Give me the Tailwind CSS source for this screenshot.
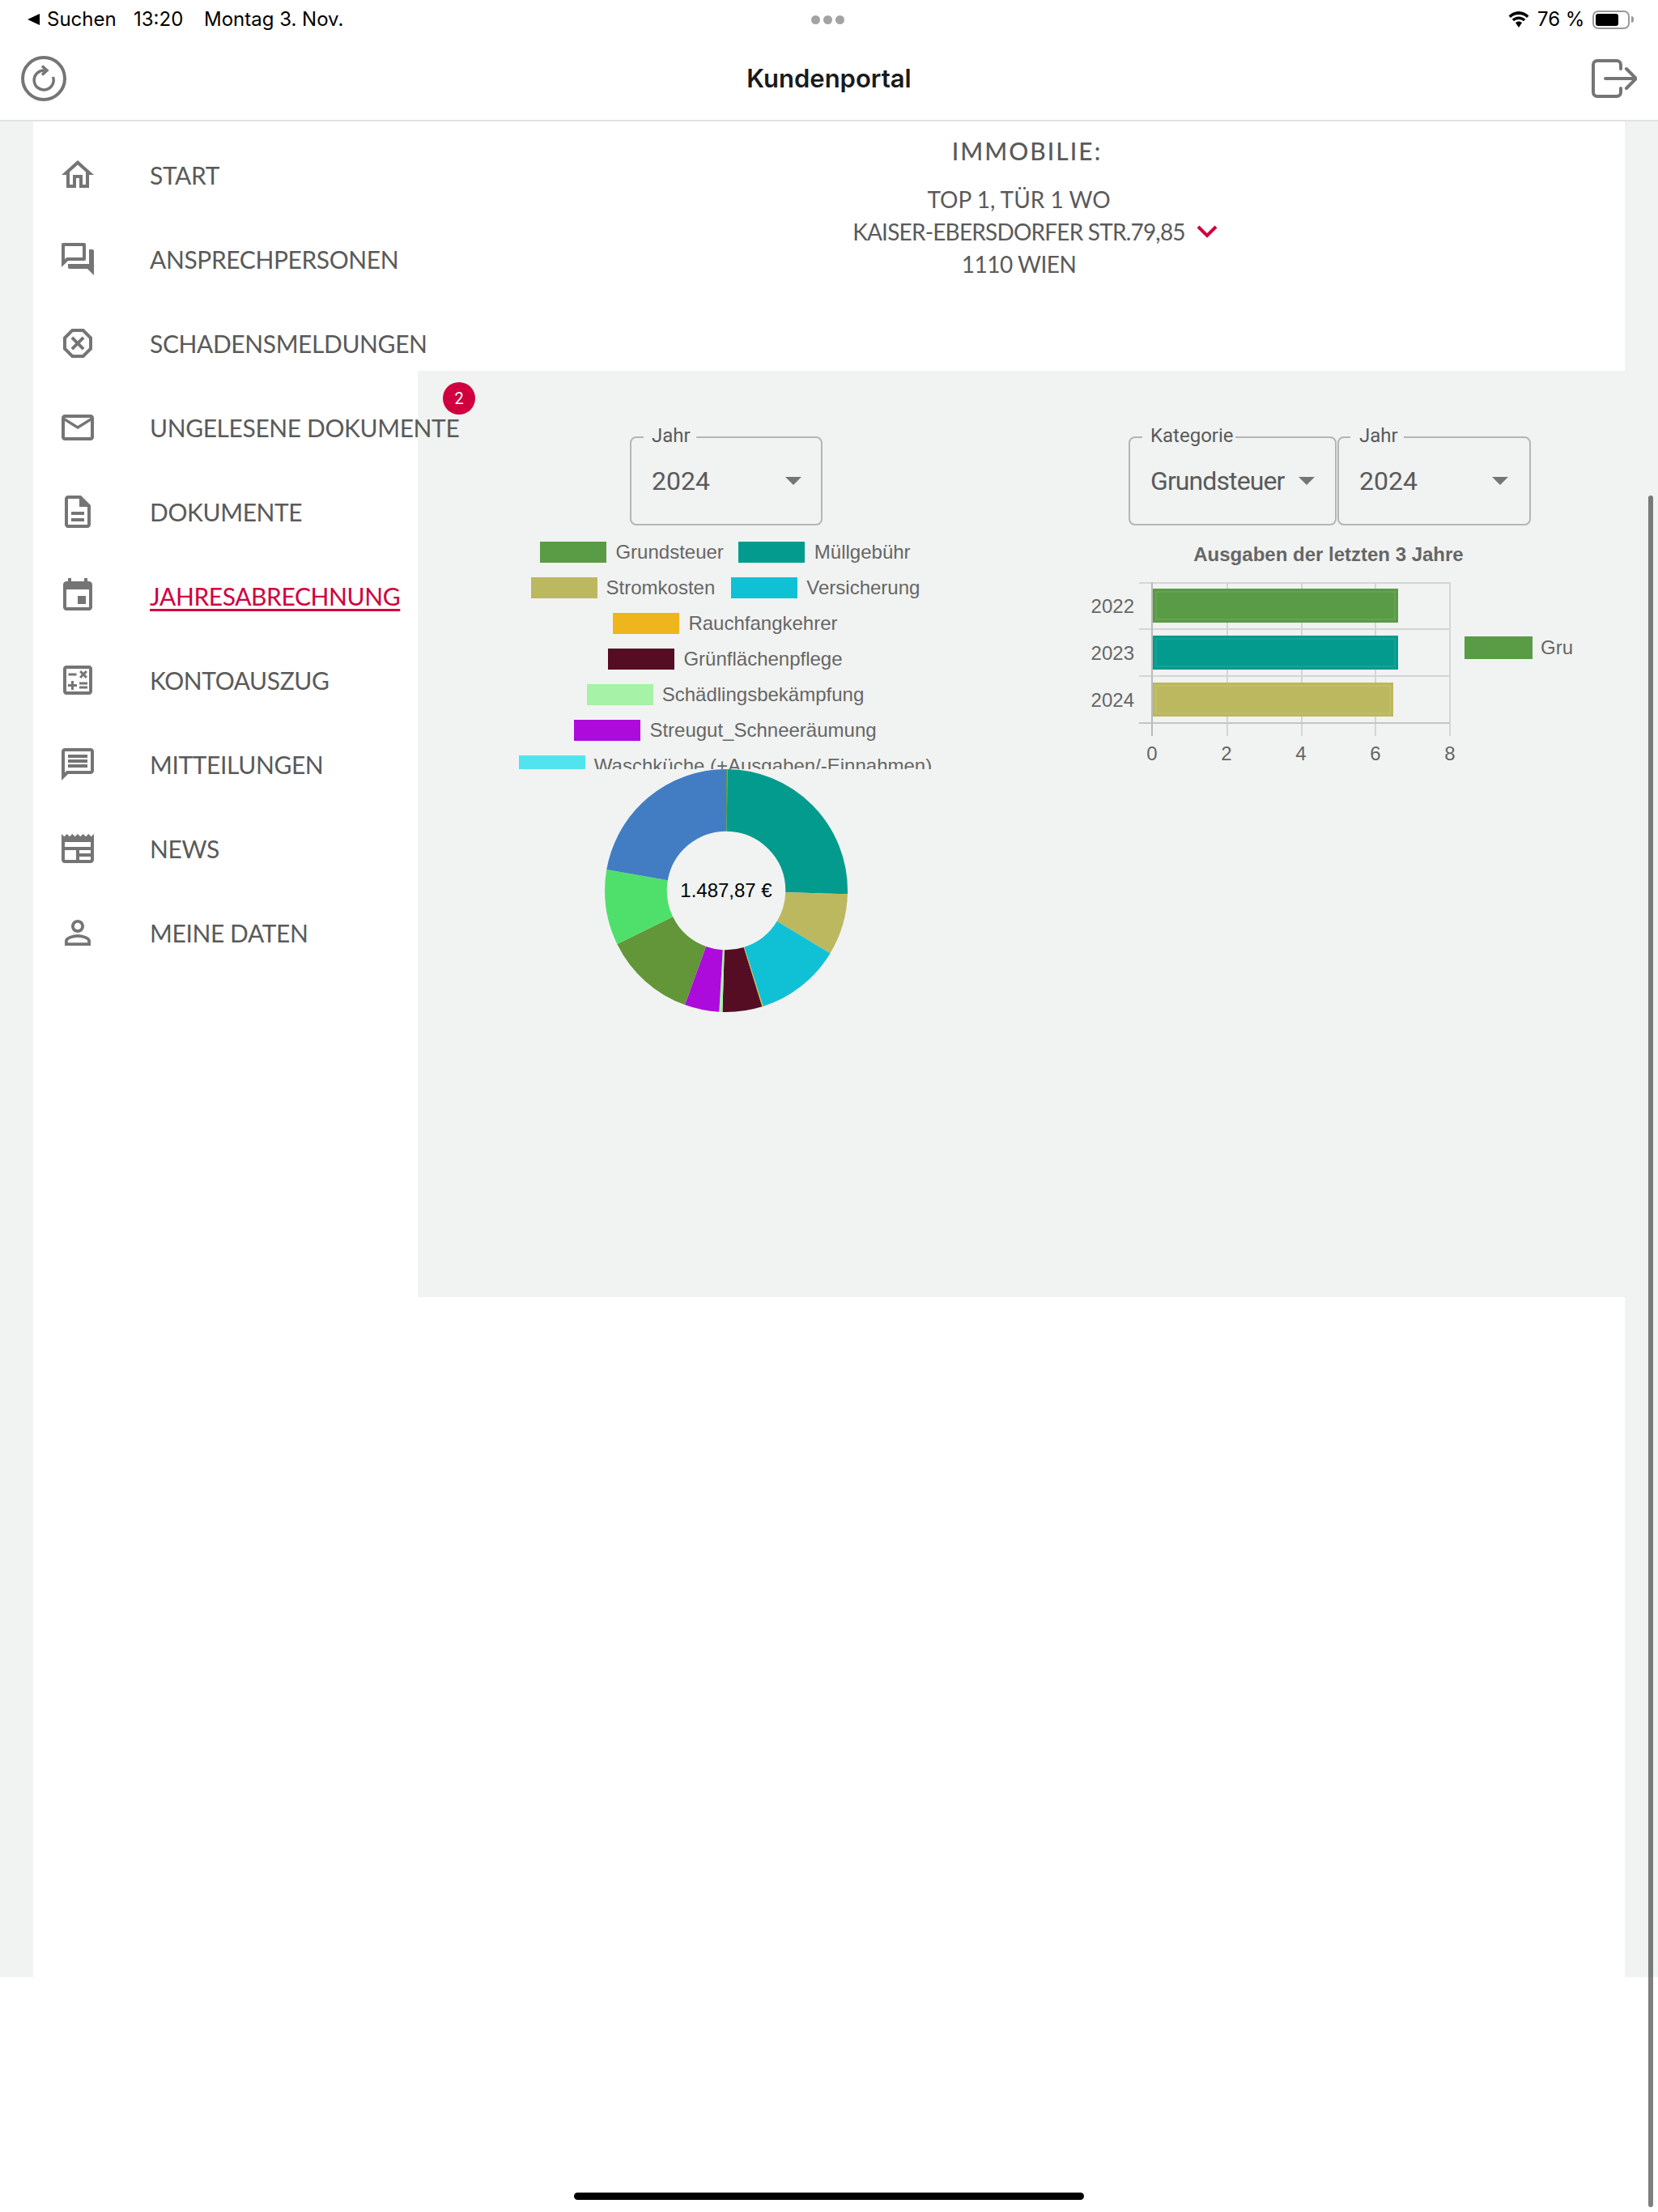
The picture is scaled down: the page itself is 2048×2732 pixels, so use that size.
<!DOCTYPE html>
<html lang="de"><head><meta charset="utf-8"><title>Kundenportal</title>
<script src="https://cdn.jsdelivr.net/npm/@tailwindcss/browser@4"></script></head>
<body class="relative w-[2048px] h-[2732px] bg-white overflow-hidden font-['Lato',sans-serif]">
<div class="h-[48px] flex items-center justify-between pl-[34px] pr-[30px] relative text-black font-['Inter',sans-serif] text-[24px]">
  <div class="flex items-center">
    <svg class="w-[15px] h-[14px] mr-[9px]" viewBox="0 0 15 14"><path d="M15 0v14L0 7z" fill="#000"/></svg>
    <span class="w-[107px]">Suchen</span><span class="w-[87px]">13:20</span><span>Montag 3. Nov.</span>
  </div>
  <div class="absolute left-[1002px] top-[19px] flex gap-[4px]"><i class="w-[11px] h-[11px] rounded-full bg-[#a3a3a3]"></i><i class="w-[11px] h-[11px] rounded-full bg-[#a3a3a3]"></i><i class="w-[11px] h-[11px] rounded-full bg-[#a3a3a3]"></i></div>
  <div class="flex items-center">
    <svg class="w-[26px] h-[20px] mr-[10px]" viewBox="0 0 26 20"><path d="M13 4c4 0 7.400 1.500 10 4l2.500-2.500C22.200 2.300 17.800 0 13 0S3.800 2.300.5 5.500L3 8c2.600-2.500 6-4 10-4zM13 10c2.300 0 4.300.9 5.800 2.300l2.500-2.500C19.100 7.700 16.200 6.400 13 6.400S6.900 7.700 4.700 9.800l2.500 2.500C8.700 10.900 10.700 10 13 10zM13 12.500c-1.600 0-3 .6-4 1.600l4 5.900 4-5.900c-1-1-2.400-1.600-4-1.600z" fill="#000"/></svg>
    <span class="w-[68px]">76 %</span>
    <div class="w-[46px] h-[23px] border-2 border-[#9a9a9a] rounded-[7px] p-[2px] pr-[12px]"><div class="w-full h-full bg-black rounded-[3px]"></div></div>
    <div class="w-[3px] h-[8px] bg-[#9a9a9a] rounded-r-full ml-[2px]"></div>
  </div>
</div>
<header class="h-[102px] border-b-2 border-[#e2e2e2] flex items-center justify-between pl-[26px] pr-[26px] pb-[2px]">
  <svg class="w-[56px] h-[56px]" viewBox="0 0 56 56" fill="none" stroke="#757575" stroke-width="4"><circle cx="28" cy="28" r="26"/><path d="M39.500 26A12 12 0 1 1 29 18" stroke-width="3.500"/><path d="M26 12.500l6 5.500-6 5.500" stroke-width="3.500"/></svg>
  <h1 class="text-[31px] font-semibold text-[#1a1a1a] font-['Inter',sans-serif]">Kundenportal</h1>
  <svg class="w-[56px] h-[48px]" viewBox="0 0 56 48" fill="none" stroke="#757575" stroke-width="4" stroke-linecap="round" stroke-linejoin="round"><path d="M36 12V7a5 5 0 0 0-5-5H7a5 5 0 0 0-5 5v34a5 5 0 0 0 5 5h24a5 5 0 0 0 5-5v-5"/><path d="M17 24h37M43 12l12 12-12 12"/></svg>
</header>
<main class="h-[2292px] bg-[#f1f3f2] pl-[41px] pr-[41px] flex">
  <div class="flex-1 bg-white flex min-w-0">
    <nav class="w-[475px] shrink-0 pt-[14px] relative z-10 text-[#5a5a5a] text-[30px] tracking-[-0.4px]">
      <a class="h-[104px] flex items-center pl-[31px] whitespace-nowrap"><svg class="w-[48px] h-[48px] shrink-0 mr-[65px] fill-[#757575]" viewBox="0 0 24 24"><path d="M12 5.690l5 4.500V18h-2v-6H9v6H7v-7.810l5-4.500M12 3L2 12h3v8h6v-6h2v6h6v-8h3L12 3z"/></svg>START</a>
      <a class="h-[104px] flex items-center pl-[31px] whitespace-nowrap"><svg class="w-[48px] h-[48px] shrink-0 mr-[65px] fill-[#757575]" viewBox="0 0 24 24"><path d="M15 4v7H5.170L4 12.170V4h11m1-2H3c-.55 0-1 .45-1 1v14l4-4h10c.55 0 1-.45 1-1V3c0-.55-.45-1-1-1zm5 4h-2v9H6v2c0 .55.45 1 1 1h11l4 4V7c0-.55-.45-1-1-1z"/></svg>ANSPRECHPERSONEN</a>
      <a class="h-[104px] flex items-center pl-[31px] whitespace-nowrap"><svg class="w-[48px] h-[48px] shrink-0 mr-[65px] fill-[#757575]" viewBox="0 0 24 24"><path d="M15.730 3H8.270L3 8.270v7.460L8.270 21h7.460L21 15.730V8.270L15.730 3zM19 14.900L14.900 19H9.100L5 14.900V9.100L9.100 5h5.800L19 9.100v5.800z"/><path d="M14.830 7.760L12 10.590 9.170 7.760 7.760 9.170 10.590 12l-2.830 2.830 1.410 1.410L12 13.410l2.830 2.830 1.410-1.410L13.410 12l2.830-2.830z"/></svg>SCHADENSMELDUNGEN</a>
      <a class="h-[104px] flex items-center pl-[31px] whitespace-nowrap relative"><svg class="w-[48px] h-[48px] shrink-0 mr-[65px] fill-[#757575]" viewBox="0 0 24 24"><path d="M20 4H4c-1.100 0-1.990.9-1.990 2L2 18c0 1.100.9 2 2 2h16c1.100 0 2-.9 2-2V6c0-1.100-.9-2-2-2zm0 14H4V8l8 5 8-5v10zm-8-7L4 6h16l-8 5z"/></svg>UNGELESENE DOKUMENTE<span class="absolute left-[506px] top-[-4px] w-[40px] h-[40px] rounded-full bg-[#d0003f] text-white text-[20px] flex items-center justify-center font-['Roboto',sans-serif]">2</span></a>
      <a class="h-[104px] flex items-center pl-[31px] whitespace-nowrap"><svg class="w-[48px] h-[48px] shrink-0 mr-[65px] fill-[#757575]" viewBox="0 0 24 24"><path d="M8 16h8v2H8zm0-4h8v2H8zm6-10H6c-1.100 0-2 .9-2 2v16c0 1.100.89 2 1.990 2H18c1.100 0 2-.9 2-2V8l-6-6zm4 18H6V4h7v5h5v11z"/></svg>DOKUMENTE</a>
      <a class="h-[104px] flex items-center pl-[31px] whitespace-nowrap text-[#d0003f]"><svg class="w-[48px] h-[48px] shrink-0 mr-[65px] fill-[#757575]" viewBox="0 0 24 24"><path d="M17 12h-5v5h5v-5zM16 1v2H8V1H6v2H5c-1.110 0-1.990.9-1.990 2L3 19c0 1.100.89 2 2 2h14c1.100 0 2-.9 2-2V5c0-1.100-.9-2-2-2h-1V1h-2zm3 18H5V8h14v11z"/></svg><span class="underline underline-offset-4">JAHRESABRECHNUNG</span></a>
      <a class="h-[104px] flex items-center pl-[31px] whitespace-nowrap"><svg class="w-[48px] h-[48px] shrink-0 mr-[65px] fill-[#757575]" viewBox="0 0 24 24"><path d="M19 3H5C3.900 3 3 3.900 3 5v14c0 1.100.9 2 2 2h14c1.100 0 2-.9 2-2V5C21 3.900 20.100 3 19 3zM19 19H5V5h14V19z"/><path d="M6.250 7.720h5v1.500h-5zM13 15.750h5v1.500h-5zM13 13.250h5v1.500h-5zM8 18h1.500v-2h2v-1.500h-2v-2H8v2H6V16h2zM14.090 10.950l1.410-1.410 1.410 1.410 1.060-1.060-1.410-1.420 1.410-1.410L16.910 6 15.500 7.410 14.090 6l-1.060 1.060 1.410 1.410-1.410 1.420z"/></svg>KONTOAUSZUG</a>
      <a class="h-[104px] flex items-center pl-[31px] whitespace-nowrap"><svg class="w-[48px] h-[48px] shrink-0 mr-[65px] fill-[#757575]" viewBox="0 0 24 24"><path d="M20 2H4c-1.100 0-2 .9-2 2v18l4-4h14c1.100 0 2-.9 2-2V4c0-1.100-.9-2-2-2zm0 14H5.170L4 17.170V4h16v12z"/><path d="M6 12h12v2H6zm0-3h12v2H6zm0-3h12v2H6z"/></svg>MITTEILUNGEN</a>
      <a class="h-[104px] flex items-center pl-[31px] whitespace-nowrap"><svg class="w-[48px] h-[48px] shrink-0 mr-[65px] fill-[#757575]" viewBox="0 0 24 24"><path d="M22 3l-1.670 1.670L18.670 3 17 4.670 15.330 3l-1.660 1.670L12 3l-1.670 1.670L8.670 3 7 4.670 5.330 3 3.670 4.670 2 3v16c0 1.100.9 2 2 2h16c1.100 0 2-.9 2-2V3zM11 19H4v-6h7v6zm9 0h-7v-2h7v2zm0-4h-7v-2h7v2zm0-4H4V8h16v3z"/></svg>NEWS</a>
      <a class="h-[104px] flex items-center pl-[31px] whitespace-nowrap"><svg class="w-[48px] h-[48px] shrink-0 mr-[65px] fill-[#757575]" viewBox="0 0 24 24"><path d="M12 5.900c1.160 0 2.100.94 2.100 2.100s-.94 2.100-2.100 2.100S9.900 9.160 9.900 8s.94-2.100 2.100-2.100m0 9c2.970 0 6.100 1.460 6.100 2.100v1.100H5.900V17c0-.64 3.130-2.100 6.100-2.100M12 4C9.790 4 8 5.790 8 8s1.790 4 4 4 4-1.790 4-4-1.790-4-4-4zm0 9c-2.670 0-8 1.340-8 4v3h16v-3c0-2.660-5.330-4-8-4z"/></svg>MEINE DATEN</a>
    </nav>
    <section class="flex-1 min-w-0 flex flex-col">
      <div class="h-[308px] text-[#5a5a5a] text-[28px] text-center">
        <h2 class="pl-[14px] pt-[14px] h-[76px] text-[30px] font-medium tracking-[2px]">IMMOBILIE:</h2>
        <div class="pr-[6px] h-[40px] leading-[40px]">TOP 1, TÜR 1 WO</div>
        <div class="pr-[6px] h-[40px] leading-[40px] tracking-[-0.8px]"><span class="relative">KAISER-EBERSDORFER STR.79,85<svg class="absolute left-[calc(100%+14px)] top-[9px] w-[26px] h-[16px]" viewBox="0 0 26 16" fill="none" stroke="#d0003f" stroke-width="4"><path d="M2 2l11 11L24 2"/></svg></span></div>
        <div class="pr-[6px] h-[40px] leading-[40px] tracking-[-0.5px]">1110 WIEN</div>
      </div>
      <div class="h-[1144px] -mr-[41px] bg-[#f1f3f2] flex pl-[120px] pt-[81px] items-start">
        <div class="w-[522px] flex flex-col items-center">
          <div class="relative w-[238px] h-[110px] border-2 border-[#b5b5b5] rounded-lg flex items-center justify-between pl-[25px] pr-[24px] font-['Roboto',sans-serif] text-[#5a5a5a] text-[32px]">
            <span class="absolute left-[15px] top-[-18px] bg-[#f1f3f2] pl-[10px] pr-[7px] text-[24px] leading-[30px]">Jahr</span>2024<i class="w-0 h-0 border-x-[10px] border-x-transparent border-t-[10px] border-t-[#757575]"></i>
          </div>
          <div class="w-[522px] h-[281px] mt-[20px] pr-[2px] overflow-hidden text-[24px] leading-[26px] text-[#666] font-['Liberation_Sans',sans-serif]">
            <div class="h-[44px] flex justify-center"><i class="w-[82px] h-[26px] bg-[#5a9b46] mr-[11px]"></i><span class="mr-[18px]">Grundsteuer</span><i class="w-[82px] h-[26px] bg-[#039b8d] mr-[12px]"></i><span>Müllgebühr</span></div>
            <div class="h-[44px] flex justify-center"><i class="w-[82px] h-[26px] bg-[#bcb85f] mr-[11px]"></i><span class="mr-[20px]">Stromkosten</span><i class="w-[82px] h-[26px] bg-[#10c1d6] mr-[11px]"></i><span>Versicherung</span></div>
            <div class="h-[44px] flex justify-center"><i class="w-[82px] h-[26px] bg-[#eeb51d] mr-[11px]"></i><span>Rauchfangkehrer</span></div>
            <div class="h-[44px] flex justify-center"><i class="w-[82px] h-[26px] bg-[#550d24] mr-[11px]"></i><span>Grünflächenpflege</span></div>
            <div class="h-[44px] flex justify-center"><i class="w-[82px] h-[26px] bg-[#a6f2a6] mr-[11px]"></i><span>Schädlingsbekämpfung</span></div>
            <div class="h-[44px] flex justify-center"><i class="w-[82px] h-[26px] bg-[#ad0bdc] mr-[11px]"></i><span>Streugut_Schneeräumung</span></div>
            <div class="h-[44px] flex justify-center"><i class="w-[82px] h-[26px] bg-[#52e4ee] mr-[11px] shrink-0"></i><span class="whitespace-nowrap">Waschküche (+Ausgaben/-Einnahmen)</span></div>
          </div>
          <div class="relative w-[300px] h-[300px]">
            <svg class="w-[300px] h-[300px] -rotate-90" viewBox="0 0 300 300" fill="none" stroke-width="76.700">
              <circle cx="150" cy="150" r="111.650" pathLength="360" stroke="#5a9b46" stroke-dasharray="0.6 360"/>
              <circle cx="150" cy="150" r="111.650" pathLength="360" stroke="#039b8d" stroke-dasharray="91.1 360" stroke-dashoffset="-0.6"/>
              <circle cx="150" cy="150" r="111.650" pathLength="360" stroke="#bcb85f" stroke-dasharray="29.4 360" stroke-dashoffset="-91.7"/>
              <circle cx="150" cy="150" r="111.650" pathLength="360" stroke="#10c1d6" stroke-dasharray="41.2 360" stroke-dashoffset="-121.1"/>
              <circle cx="150" cy="150" r="111.650" pathLength="360" stroke="#eeb51d" stroke-dasharray="0.5 360" stroke-dashoffset="-162.3"/>
              <circle cx="150" cy="150" r="111.650" pathLength="360" stroke="#550d24" stroke-dasharray="19 360" stroke-dashoffset="-162.8"/>
              <circle cx="150" cy="150" r="111.650" pathLength="360" stroke="#a6f2a6" stroke-dasharray="1.6 360" stroke-dashoffset="-181.8"/>
              <circle cx="150" cy="150" r="111.650" pathLength="360" stroke="#ad0bdc" stroke-dasharray="16.5 360" stroke-dashoffset="-183.4"/>
              <circle cx="150" cy="150" r="111.650" pathLength="360" stroke="#629639" stroke-dasharray="44 360" stroke-dashoffset="-199.9"/>
              <circle cx="150" cy="150" r="111.650" pathLength="360" stroke="#4fe06b" stroke-dasharray="36.1 360" stroke-dashoffset="-243.9"/>
              <circle cx="150" cy="150" r="111.650" pathLength="360" stroke="#427dc4" stroke-dasharray="80 360" stroke-dashoffset="-280"/>
            </svg>
            <div class="absolute inset-0 flex items-center justify-center text-black text-[24px] font-['Liberation_Sans',sans-serif]">1.487,87 €</div>
          </div>
        </div>
        <div class="ml-[182px] w-[620px] flex flex-col">
          <div class="flex gap-[1px] pl-[54px]">
            <div class="relative w-[257px] h-[110px] border-2 border-[#b5b5b5] rounded-lg flex items-center justify-between pl-[25px] pr-[25px] font-['Roboto',sans-serif] text-[#5a5a5a] text-[32px]">
              <span class="absolute left-[15px] top-[-18px] bg-[#f1f3f2] pl-[10px] pr-[2px] text-[24px] leading-[30px]">Kategorie</span><span class="tracking-[-0.9px]">Grundsteuer</span><i class="w-0 h-0 border-x-[10px] border-x-transparent border-t-[10px] border-t-[#757575]"></i>
            </div>
            <div class="relative w-[239px] h-[110px] border-2 border-[#b5b5b5] rounded-lg flex items-center justify-between pl-[25px] pr-[26px] font-['Roboto',sans-serif] text-[#5a5a5a] text-[32px]">
              <span class="absolute left-[14px] top-[-18px] bg-[#f1f3f2] pl-[11px] pr-[7px] text-[24px] leading-[30px]">Jahr</span>2024<i class="w-0 h-0 border-x-[10px] border-x-transparent border-t-[10px] border-t-[#757575]"></i>
            </div>
          </div>
          <svg class="w-[620px] h-[300px] mt-[11px] font-['Liberation_Sans',sans-serif]" viewBox="1340 660 620 300" fill="#666" font-size="24">
            <text x="1641" y="693" text-anchor="middle" font-weight="700">Ausgaben der letzten 3 Jahre</text>
            <g stroke="#d4d5d5" stroke-width="2" fill="none"><path d="M1407 720H1791M1407 777H1791M1407 835H1791M1516 719V909M1608 719V909M1699 719V909M1791 719V909"/><path d="M1407 893H1791" stroke="#c4c5c5"/><path d="M1423 719V909" stroke="#b9baba"/></g>
            <rect x="1424" y="727" width="303" height="42" fill="#5a9b46"/><rect x="1428" y="731" width="295" height="34" fill="none" stroke="#fff" stroke-opacity=".1" stroke-width="1.500"/>
            <rect x="1424" y="785" width="303" height="42" fill="#039b8d"/><rect x="1428" y="789" width="295" height="34" fill="none" stroke="#fff" stroke-opacity=".1" stroke-width="1.500"/>
            <rect x="1424" y="843" width="297" height="42" fill="#bcb85f"/><rect x="1428" y="847" width="289" height="34" fill="none" stroke="#fff" stroke-opacity=".1" stroke-width="1.500"/>
            <g text-anchor="end"><text x="1401" y="757">2022</text><text x="1401" y="815">2023</text><text x="1401" y="873">2024</text></g>
            <g text-anchor="middle"><text x="1423" y="939">0</text><text x="1515" y="939">2</text><text x="1607" y="939">4</text><text x="1699" y="939">6</text><text x="1791" y="939">8</text></g>
            <rect x="1809" y="786" width="84" height="28" fill="#5a9b46"/><text x="1903" y="808">Gru</text>
          </svg>
        </div>
      </div>
    </section>
  </div>
</main>
<div class="absolute left-[2036px] top-[612px] w-[6px] h-[2114px] rounded-full bg-black/50"></div>
<div class="absolute left-[709px] top-[2708px] w-[630px] h-[9px] rounded-full bg-black"></div>
</body></html>
